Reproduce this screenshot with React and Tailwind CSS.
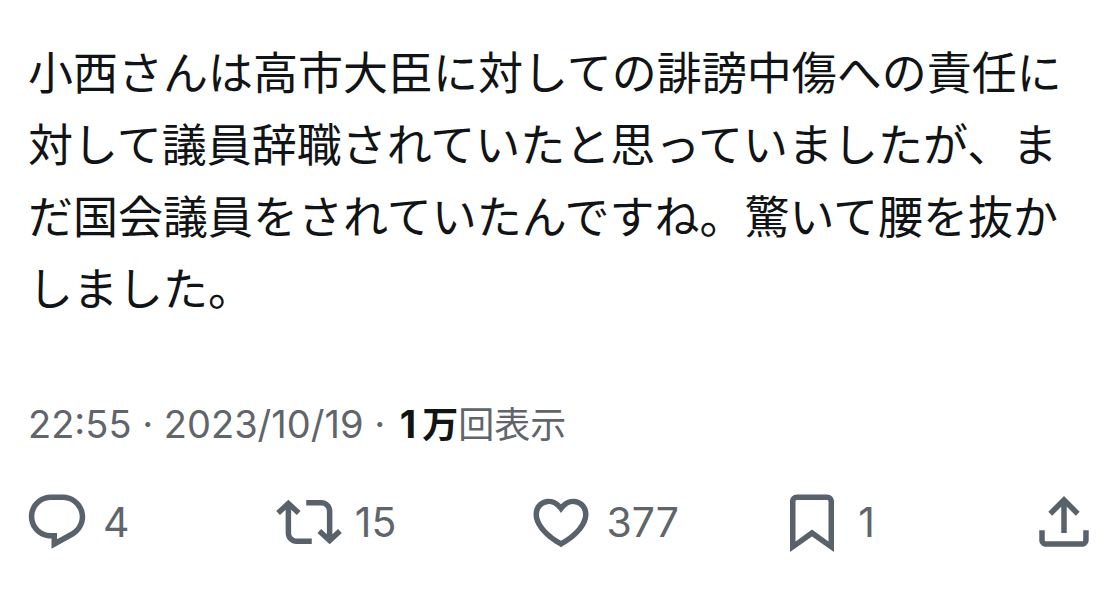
const ICONS = {
  reply: 'M1.751 10c0-4.42 3.584-8 8.005-8h4.366c4.49 0 8.129 3.64 8.129 8.13 0 2.96-1.607 5.68-4.196 7.11l-8.054 4.46v-3.69h-.067c-4.49.1-8.183-3.51-8.183-8.01zm8.005-6c-3.317 0-6.005 2.69-6.005 6 0 3.37 2.77 6.08 6.138 6.01l.351-.01h1.761v2.3l5.087-2.81c1.951-1.08 3.163-3.13 3.163-5.36 0-3.39-2.744-6.13-6.129-6.13H9.756z',
  repost: 'M4.5 3.88l4.432 4.14-1.364 1.46L5.5 7.55V16c0 1.1.896 2 2 2H13v2H7.5c-2.209 0-4-1.79-4-4V7.55L1.432 9.48.068 8.02 4.5 3.88zM16.5 6H11V4h5.5c2.209 0 4 1.79 4 4v8.45l2.068-1.93 1.364 1.46-4.432 4.14-4.432-4.14 1.364-1.46 2.068 1.93V8c0-1.1-.896-2-2-2z',
  like: 'M16.697 5.5c-1.222-.06-2.679.51-3.89 2.16l-.805 1.09-.806-1.09C9.984 6.01 8.526 5.44 7.304 5.5c-1.243.07-2.349.78-2.91 1.91-.552 1.12-.633 2.78.479 4.82 1.074 1.97 3.257 4.27 7.129 6.61 3.87-2.34 6.052-4.64 7.126-6.61 1.111-2.04 1.03-3.7.477-4.82-.561-1.13-1.666-1.84-2.908-1.91zm4.187 7.69c-1.351 2.48-4.001 5.12-8.379 7.67l-.503.3-.504-.3c-4.379-2.55-7.029-5.19-8.382-7.67-1.36-2.5-1.41-4.86-.514-6.67.887-1.79 2.647-2.91 4.601-3.01 1.651-.09 3.368.56 4.798 2.01 1.429-1.45 3.146-2.1 4.796-2.01 1.954.1 3.714 1.22 4.601 3.01.896 1.81.846 4.17-.514 6.67z',
  bookmark: 'M4 4.5C4 3.12 5.119 2 6.5 2h11C18.881 2 20 3.12 20 4.5v18.44l-8-5.71-8 5.71V4.5zM6.5 4c-.276 0-.5.22-.5.5v14.56l6-4.29 6 4.29V4.5c0-.28-.224-.5-.5-.5h-11z',
  share: 'M12 2.59l5.7 5.7-1.41 1.42L13 6.41V16h-2V6.41l-3.3 3.3-1.41-1.42L12 2.59zM21 15l-.02 3.51c0 1.38-1.12 2.49-2.5 2.49H5.5C4.11 21 3 19.88 3 18.5V15h2v3.5c0 .28.22.5.5.5h12.98c.28 0 .5-.22.5-.5L19 15h2z',
}

const ACTIONS = [
  { icon: 'reply', label: '返信', count: 4 },
  { icon: 'repost', label: 'リポスト', count: 15 },
  { icon: 'like', label: 'いいね', count: 377 },
  { icon: 'bookmark', label: 'ブックマーク', count: 1 },
]

function Icon({ name }) {
  return (
    <svg viewBox="0 0 24 24" className="size-[66px] shrink-0 fill-[#59616a]" aria-hidden="true">
      <path d={ICONS[name]} />
    </svg>
  )
}

export default function App() {
  return (
    <article lang="ja" className="bg-white pt-[38px] font-['Inter','Noto_Sans_CJK_JP',sans-serif]">
      <p className="px-7 text-[45px] leading-[72px] text-[#111416]">
        小西さんは高市大臣に対しての誹謗中傷への責任に対して議員辞職されていたと思っていましたが、まだ国会議員をされていたんですね。驚いて腰を抜かしました。
      </p>

      <div className="mt-[74px] px-7 text-[38px] leading-[48px] text-[#5f656b]">
        <a href="#status">
          <time dateTime="2023-10-19T22:55">22:55 · 2023/10/19</time>
        </a>
        {' · '}
        <span className="ml-1 font-bold text-[#111416]">1<span className="ml-1.5 text-[36px]">万</span></span>
        <span className="text-[36px]">回表示</span>
      </div>

      {/* Actions */}
      <div className="mt-10 flex items-center pl-6">
        {ACTIONS.map(a => (
          <div key={a.icon} className="flex-1">
            <button type="button" aria-label={`${a.count} ${a.label}`} className="flex items-center gap-[13px]">
              <Icon name={a.icon} />
              <span className="text-[41px] leading-[48px] text-[#5f656b]">{a.count}</span>
            </button>
          </div>
        ))}
        <button type="button" aria-label="共有">
          <Icon name="share" />
        </button>
      </div>
    </article>
  )
}
